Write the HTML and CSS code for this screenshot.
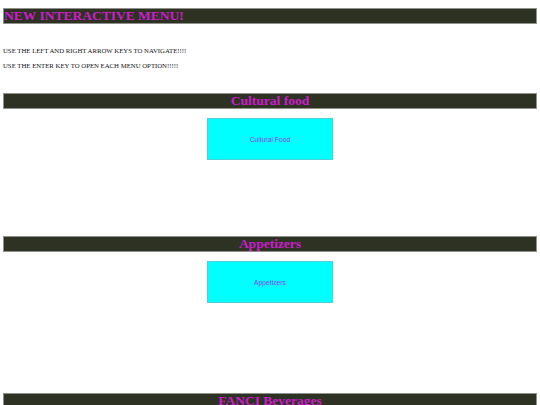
FILE: index.html
```html
<!DOCTYPE html>
<html>
<head>
<meta charset="utf-8">
<link rel="stylesheet" href="styles.css">
</head>
<body>
<h1 class="bar title">NEW INTERACTIVE MENU!</h1>
<div class="intro">
  <p>USE THE LEFT AND RIGHT ARROW KEYS TO NAVIGATE!!!!</p>
  <p>USE THE ENTER KEY TO OPEN EACH MENU OPTION!!!!!</p>
</div>
<section class="section s1">
  <h1 class="bar center">Cultural food</h1>
  <div class="box">Cultural Food</div>
</section>
<section class="section s2">
  <h1 class="bar center">Appetizers</h1>
  <div class="box">Appetizers</div>
</section>
<section class="section s3">
  <h1 class="bar center">FANCI Beverages</h1>
</section>
</body>
</html>
```
FILE: styles.css
```css
html, body {
  margin: 0;
  padding: 0;
  background: #ffffff;
  overflow: hidden;
  height: 405px;
}
body {
  padding: 0 3px 0 3px;
  font-family: "Liberation Serif", "Times New Roman", serif;
}
.bar {
  margin: 0;
  box-sizing: border-box;
  height: 16px;
  line-height: 14px;
  background: #2e3223;
  border: 1px solid #8f928a;
  color: #cc1ccc;
  font-family: "Liberation Serif", "Times New Roman", serif;
  font-weight: bold;
  font-size: 13.5px;
  white-space: nowrap;
  overflow: hidden;
}
.title {
  margin-top: 8px;
  text-align: left;
  padding-left: 0;
}
.center {
  text-align: center;
}
.intro {
  display: flex;
  flex-direction: column;
  gap: 7px;
  margin-top: 23px;
}
.intro p {
  margin: 0;
  font-size: 6.75px;
  line-height: 8px;
  color: #111111;
}
.s1 { margin-top: 23px; }
.s2 { margin-top: 76px; }
.s3 { margin-top: 90px; }
.box {
  box-sizing: border-box;
  width: 126px;
  height: 42px;
  margin: 9px auto 0 auto;
  background: #00ffff;
  border: 1px solid #4fcfd6;
  color: #8a3ff0;
  font-family: "Liberation Sans", Arial, sans-serif;
  font-size: 6.75px;
  display: flex;
  align-items: center;
  justify-content: center;
}
```
